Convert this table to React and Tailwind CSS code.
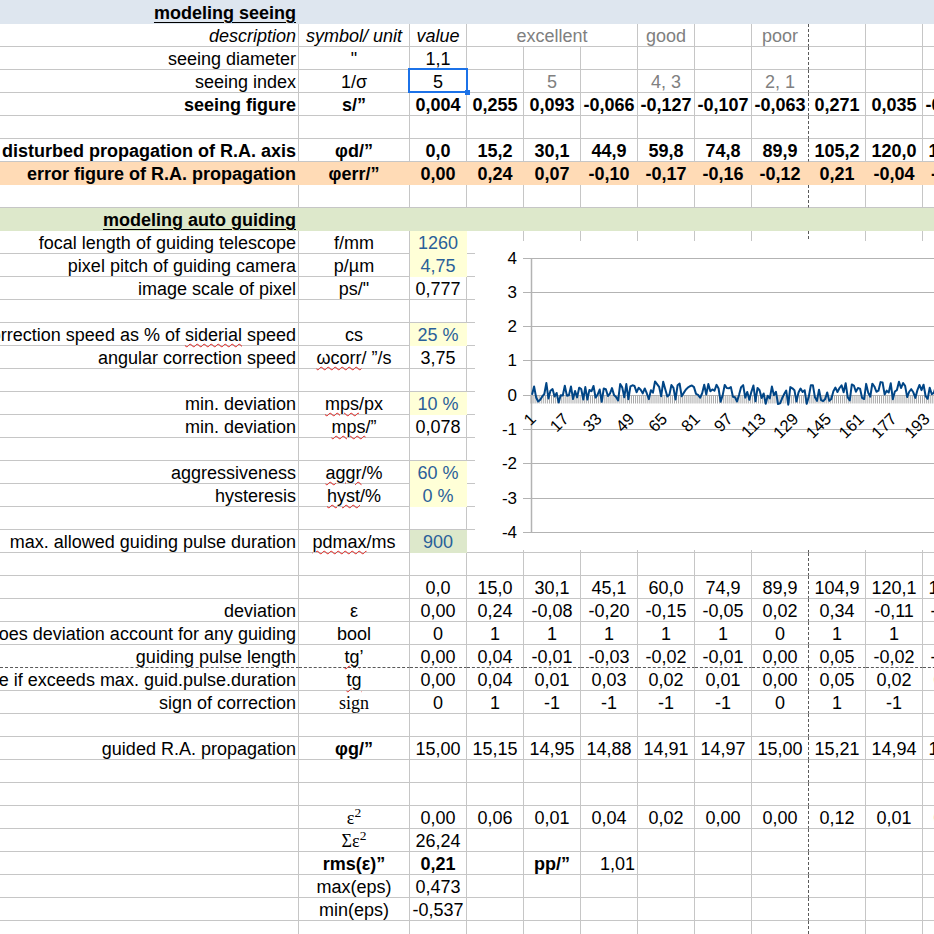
import React from "react";

const BR_GRID = "[border-right:1px_solid_#c6c6c6]";
const BR_DASH = "[border-right:1px_dashed_#5a5a5a]";
const BB_GRID = "[border-bottom:1px_solid_#c6c6c6]";
const BB_DASH = "[border-bottom:1px_dashed_#5a5a5a]";
const BR_T = "[border-right:1px_solid_transparent]";
const BB_T = "[border-bottom:1px_solid_transparent]";
const Y_CELL = "bg-[#ffffd7] [border-right:1px_solid_#ffffd7] [border-bottom:1px_solid_#ffffd7]";
const G_CELL = "bg-[#dde8cb] [border-right:1px_solid_#dde8cb] [border-bottom:1px_solid_#dde8cb]";

function Sq({ children }) {
  return (
    <span className="underline decoration-wavy decoration-[#e0201c] decoration-1 underline-offset-[2px]">
      {children}
    </span>
  );
}

function Hdr({ children }) {
  return <span className="font-bold underline underline-offset-[3px]">{children}</span>;
}

const g = (t) => ({ t, clr: "g" });
const yv = (t) => ({ t, clr: "b", bg: "y" });
const nr = (s) => s.split(" ");

const ROWS = [
  { band: "blue", h: 24, cells: [{ t: <Hdr>modeling seeing</Hdr> }] },
  {
    cells: [
      { t: "description", i: 1 },
      { t: "symbol/ unit", i: 1 },
      { t: "value", i: 1 },
      { t: "excellent", clr: "g", span: 3 },
      "",
      "",
      g("good"),
      "",
      g("poor"),
      "",
      "",
      "",
    ],
  },
  { cells: ["seeing diameter", '"', "1,1"] },
  { cells: ["seeing index", "1/σ", "5", "", g("5"), "", g("4, 3"), "", g("2, 1")] },
  {
    bold: true,
    cells: ["seeing figure", "s/”", ...nr("0,004 0,255 0,093 -0,066 -0,127 -0,107 -0,063 0,271 0,035 -0,084")],
  },
  { cells: [] },
  {
    bold: true,
    cells: ["disturbed propagation of R.A. axis", "φd/”", ...nr("0,0 15,2 30,1 44,9 59,8 74,8 89,9 105,2 120,0 134,9")],
  },
  {
    band: "orange",
    bold: true,
    cells: ["error figure of R.A. propagation", "φerr/”", ...nr("0,00 0,24 0,07 -0,10 -0,17 -0,16 -0,12 0,21 -0,04 -0,11")],
  },
  { cells: [] },
  { band: "green", cells: [{ t: <Hdr>modeling auto guiding</Hdr> }] },
  { cells: ["focal length of guiding telescope", "f/mm", yv("1260")] },
  { cells: ["pixel pitch of guiding camera", "p/µm", yv("4,75")] },
  { cells: ["image scale of pixel", 'ps/"', "0,777"] },
  { cells: [] },
  {
    cells: [
      { t: <>correction speed as % of <Sq>siderial</Sq> speed</> },
      "cs",
      yv("25 %"),
    ],
  },
  { cells: ["angular correction speed", { t: <><Sq>ωcorr</Sq>/ ”/s</> }, "3,75"] },
  { cells: [] },
  { cells: ["min. deviation", { t: <><Sq>mps</Sq>/px</> }, yv("10 %")] },
  { cells: ["min. deviation", { t: <><Sq>mps</Sq>/”</> }, "0,078"] },
  { cells: [] },
  { cells: ["aggressiveness", { t: <><Sq>aggr</Sq>/%</> }, yv("60 %")] },
  { cells: ["hysteresis", { t: <><Sq>hyst</Sq>/%</> }, yv("0 %")] },
  { cells: [] },
  {
    cells: [
      "max. allowed guiding pulse duration",
      { t: <><Sq>pdmax</Sq>/ms</> },
      { t: "900", clr: "b", bg: "gr" },
    ],
  },
  { cells: [] },
  { cells: ["", "", ...nr("0,0 15,0 30,1 45,1 60,0 74,9 89,9 104,9 120,1 135,0")] },
  { cells: ["deviation", "ε", ...nr("0,00 0,24 -0,08 -0,20 -0,15 -0,05 0,02 0,34 -0,11 -0,15")] },
  { cells: ["does deviation account for any guiding", "bool", ...nr("0 1 1 1 1 1 0 1 1 1")] },
  {
    dashB: true,
    cells: ["guiding pulse length", { t: <><Sq>tg</Sq>’</> }, ...nr("0,00 0,04 -0,01 -0,03 -0,02 -0,01 0,00 0,05 -0,02 -0,03")],
  },
  {
    cells: [
      "guiding pulse length set to max. value if exceeds max. guid.pulse.duration",
      { t: <Sq>tg</Sq> },
      ...nr("0,00 0,04 0,01 0,03 0,02 0,01 0,00 0,05 0,02 0,03"),
    ],
  },
  { cells: ["sign of correction", { t: "sign", serif: 1 }, ...nr("0 1 -1 -1 -1 -1 0 1 -1 -1")] },
  { cells: [] },
  {
    cells: ["guided R.A. propagation", { t: "φg/”", b: 1 }, ...nr("15,00 15,15 14,95 14,88 14,91 14,97 15,00 15,21 14,94 15,04")],
  },
  { cells: [] },
  { cells: [] },
  {
    cells: ["", { t: <>ε<sup>2</sup></>, serif: 1 }, ...nr("0,00 0,06 0,01 0,04 0,02 0,00 0,00 0,12 0,01 0,02")],
  },
  { cells: ["", { t: <>Σε<sup>2</sup></>, serif: 1 }, "26,24"] },
  {
    cells: [
      "",
      { t: "rms(ε)”", b: 1 },
      { t: "0,21", b: 1 },
      "",
      { t: "pp/”", b: 1 },
      { t: "1,01", al: "r" },
    ],
  },
  { cells: ["", "max(eps)", "0,473"] },
  { cells: ["", "min(eps)", "-0,537"] },
  { cells: [] },
];

function Cell({ col, c, span, band, bold, dashB }) {
  const width =
    span === 3 ? "w-[171px]" : col === 0 ? "w-[299px]" : col === 1 ? "w-[111px]" : "w-[57px]";
  const al = c.al || (col === 0 ? "r" : "c");
  const justify = al === "r" ? "justify-end pr-[2px]" : "justify-center";
  let borders;
  if (band) borders = `${BR_T} ${BB_T}`;
  else if (c.bg === "y") borders = Y_CELL;
  else if (c.bg === "gr") borders = G_CELL;
  else borders = `${col + span - 1 === 8 ? BR_DASH : BR_GRID} ${dashB ? BB_DASH : BB_GRID}`;
  const txt = [
    bold || c.b ? "font-bold" : "",
    c.i ? "italic" : "",
    c.clr === "g" ? "text-[#808080]" : c.clr === "b" ? "text-[#2a6099]" : "",
    c.serif ? "font-['Liberation_Serif',serif]" : "",
  ].join(" ");
  return (
    <div className={`shrink-0 h-full flex items-end whitespace-nowrap ${width} ${justify} ${borders}`}>
      <span className={`leading-[20px] ${txt}`}>{c.t}</span>
    </div>
  );
}

function Row({ r }) {
  const bandBg =
    r.band === "blue"
      ? "bg-[#dee6ef]"
      : r.band === "orange"
      ? "bg-[#ffdbb6]"
      : r.band === "green"
      ? "bg-[#dde8cb]"
      : "";
  const h = r.h === 24 ? "h-[24px]" : "h-[23px]";
  const list = [...r.cells];
  while (list.length < 12) list.push("");
  const cells = [];
  for (let col = 0; col < 12; col++) {
    const raw = list[col];
    const c =
      raw !== null && typeof raw === "object" && !React.isValidElement(raw) ? raw : { t: raw };
    const span = c.span || 1;
    cells.push(
      <Cell key={col} col={col} c={c} span={span} band={!!r.band} bold={r.bold} dashB={r.dashB} />
    );
    col += span - 1;
  }
  return <div className={`flex ${h} ${bandBg}`}>{cells}</div>;
}

function Chart() {
  const w = 2.05;
  const x0 = 56;
  const gy = (v) => 153.7 - 34.3 * v;
  const gl = (v) => Math.round(gy(v)) + 0.5;
  const seed = [0, 0.24, -0.08, -0.2, -0.15, -0.05, 0.02, 0.34, -0.11];
  let s = 987654321;
  const rnd = () => {
    s = (s * 16807) % 2147483647;
    return s / 2147483647;
  };
  const vals = [];
  for (let i = 0; i < 210; i++) {
    if (i < seed.length) vals.push(seed[i]);
    else {
      const d = 0.05 + 0.07 * Math.sin((2 * Math.PI * (i - 35)) / 115);
      vals.push(d + (rnd() - 0.5) * 0.55);
    }
  }
  const pts = vals.map((v, i) => `${(x0 + (i + 0.5) * w).toFixed(2)},${gy(v).toFixed(2)}`).join(" ");
  let ticks = "";
  for (let k = 0; k < 210; k++) ticks += `M${(x0 + k * w).toFixed(2)} ${gl(0)}v8`;
  const yl = [4, 3, 2, 1, 0, -1, -2, -3, -4];
  const xl = [];
  for (let i = 1; i <= 209; i += 16) xl.push(i);
  return (
    <div className="absolute left-[475px] top-[241px] w-[459px] h-[309px] bg-white">
      <svg width="459" height="309" viewBox="0 0 459 309">
        {yl.map((v) => (
          <line key={v} x1="48" x2="459" y1={gl(v)} y2={gl(v)} stroke="#b3b3b3" strokeWidth="1" />
        ))}
        <line x1={x0 + 0.5} x2={x0 + 0.5} y1={gl(4)} y2={gl(-4)} stroke="#b3b3b3" strokeWidth="1.5" />
        <path d={ticks} stroke="#a8a8a8" strokeWidth="1" fill="none" />
        {yl.map((v) => (
          <text
            key={v}
            x="42"
            y={gy(v) + 6}
            textAnchor="end"
            fontSize="17"
            fill="#000"
            fontFamily="Liberation Sans, Arial, sans-serif"
          >
            {v < 0 ? `-${-v}` : v}
          </text>
        ))}
        {xl.map((i) => {
          const ax = x0 + (i - 0.5) * w + 5;
          const ay = 179;
          return (
            <text
              key={i}
              x={ax}
              y={ay}
              textAnchor="end"
              fontSize="16.5"
              fill="#000"
              fontFamily="Liberation Sans, Arial, sans-serif"
              transform={`rotate(-45 ${ax} ${ay})`}
            >
              {i}
            </text>
          );
        })}
        <polyline points={pts} fill="none" stroke="#004586" strokeWidth="2" strokeLinejoin="round" />
      </svg>
    </div>
  );
}

export default function App() {
  return (
    <div className="relative w-[934px] h-[934px] overflow-hidden bg-white text-black text-[18px] font-['Liberation_Sans',Arial,sans-serif]">
      {ROWS.map((r, idx) => (
        <Row key={idx} r={r} />
      ))}
      <Chart />
      <div className="absolute left-[408px] top-[68px] w-[60px] h-[25px] border-2 border-[#1c72e8]" />
      <div className="absolute left-[465px] top-[90px] w-[5px] h-[5px] bg-[#1c72e8]" />
    </div>
  );
}
